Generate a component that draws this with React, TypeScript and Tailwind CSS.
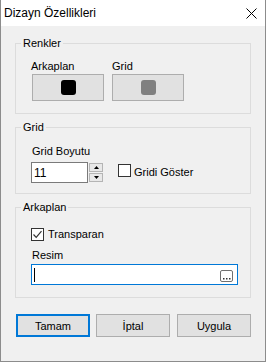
import React from "react"

function Checkbox({ checked }: { checked?: boolean }) {
  return (
    <span className="w-[13px] h-[13px] border border-[#333333] bg-white flex items-center justify-center shrink-0">
      {checked && (
        <svg width="11" height="11" viewBox="0 0 11 11">
          <path d="M1.5 5.5 L4.2 8.3 L9.5 2.2" fill="none" stroke="#333333" strokeWidth="1.2" />
        </svg>
      )}
    </span>
  )
}

function Group({ title, children, className = "" }: { title: string; children: React.ReactNode; className?: string }) {
  return (
    <fieldset className={`border border-[#dcdcdc] ${className}`}>
      <legend className="ml-[5px] px-[2px] leading-[14px]">{title}</legend>
      {children}
    </fieldset>
  )
}

function ColorButton({ color }: { color: string }) {
  return (
    <button className="w-[72px] h-[27px] bg-[#e1e1e1] border border-[#adadad] flex items-center justify-center">
      <span className={`w-[15px] h-[15px] rounded-[3px] ${color}`} />
    </button>
  )
}

export default function App() {
  return (
    <div className="w-[268px] h-[363px] bg-white font-['Liberation_Sans',Arial,sans-serif] text-[11px] text-black">
      <div className="w-[266px] h-[362px] border-x border-b border-[#8c8c8c] bg-[#f0f0f0] flex flex-col">
        {/* title bar */}
        <div className="h-[26px] bg-white flex items-center justify-between pl-[3px] pr-[8px]">
          <span className="text-[12px] leading-[16px] mt-[-1px]">Dizayn Özellikleri</span>
          <svg width="11" height="11" viewBox="0 0 11 11" className="mt-[1px]">
            <path d="M0.5 0.5 L10.5 10.5 M10.5 0.5 L0.5 10.5" stroke="#000" strokeWidth="1" />
          </svg>
        </div>

        <div className="px-[14px] pt-[10px] flex flex-col">
          <Group title="Renkler">
            <div className="flex gap-[8px] pl-[16px] pt-[9px] pb-[12px]">
              <div className="flex flex-col">
                <span className="leading-[14px] -ml-px">Arkaplan</span>
                <div className="mt-[1px]">
                  <ColorButton color="bg-black" />
                </div>
              </div>
              <div className="flex flex-col">
                <span className="leading-[14px]">Grid</span>
                <div className="mt-[1px]">
                  <ColorButton color="bg-[#808080]" />
                </div>
              </div>
            </div>
          </Group>

          <Group title="Grid" className="mt-[6px]">
            <div className="flex flex-col pl-[15px] pt-[10px] pb-[10px]">
              <span className="leading-[14px] ml-px">Grid Boyutu</span>
              <div className="flex items-start mt-[4px]">
                <div className="w-[57px] h-[21px] bg-white border border-[#7a7a7a] flex items-center pl-[2px] text-[12px]">
                  11
                </div>
                <div className="flex flex-col gap-[1px] mt-[1px] ml-[1px]">
                  <div className="w-[14px] h-[9px] bg-[#e8e8e8] border border-[#b4b4b4] flex items-center justify-center">
                    <svg width="5" height="3" viewBox="0 0 5 3">
                      <path d="M2.5 0 L5 3 L0 3 Z" fill="#000" />
                    </svg>
                  </div>
                  <div className="w-[14px] h-[9px] bg-[#e8e8e8] border border-[#b4b4b4] flex items-center justify-center">
                    <svg width="5" height="3" viewBox="0 0 5 3">
                      <path d="M0 0 L5 0 L2.5 3 Z" fill="#000" />
                    </svg>
                  </div>
                </div>
                <div className="flex items-center ml-[15px] mt-[1px] h-[14px]">
                  <Checkbox />
                  <span className="ml-[3px] leading-[14px] mt-[3px]">Gridi Göster</span>
                </div>
              </div>
            </div>
          </Group>

          <Group title="Arkaplan" className="mt-[6px]">
            <div className="flex flex-col pl-[15px] pr-[12px] pt-[13px] pb-[12px]">
              <div className="flex items-center h-[14px]">
                <Checkbox checked />
                <span className="ml-[4px] leading-[14px]">Transparan</span>
              </div>
              <span className="leading-[14px] mt-[7px] ml-px">Resim</span>
              <div className="mt-[2px] w-[207px] h-[21px] bg-white border border-[#0078d7] flex items-center justify-between pl-[2px] pr-[4px]">
                <span className="w-px h-[14px] bg-black" />
                <svg width="13" height="12" viewBox="0 0 13 12" className="mt-[2px]">
                  <rect x="0.5" y="0.5" width="12" height="11" rx="1.5" fill="none" stroke="#707070" />
                  <rect x="3" y="8" width="1.5" height="1.5" fill="#333" />
                  <rect x="6" y="8" width="1.5" height="1.5" fill="#333" />
                  <rect x="9" y="8" width="1.5" height="1.5" fill="#333" />
                </svg>
              </div>
            </div>
          </Group>

          <div className="flex mt-[16px] pl-[1px]">
            <button className="w-[74px] h-[23px] bg-[#e1e1e1] border-2 border-[#0078d7] leading-[14px]">Tamam</button>
            <button className="w-[74px] h-[23px] bg-[#e1e1e1] border border-[#adadad] ml-[6px] leading-[14px]">İptal</button>
            <button className="w-[74px] h-[23px] bg-[#e1e1e1] border border-[#adadad] ml-[7px] leading-[14px]">Uygula</button>
          </div>
        </div>
      </div>
    </div>
  )
}
